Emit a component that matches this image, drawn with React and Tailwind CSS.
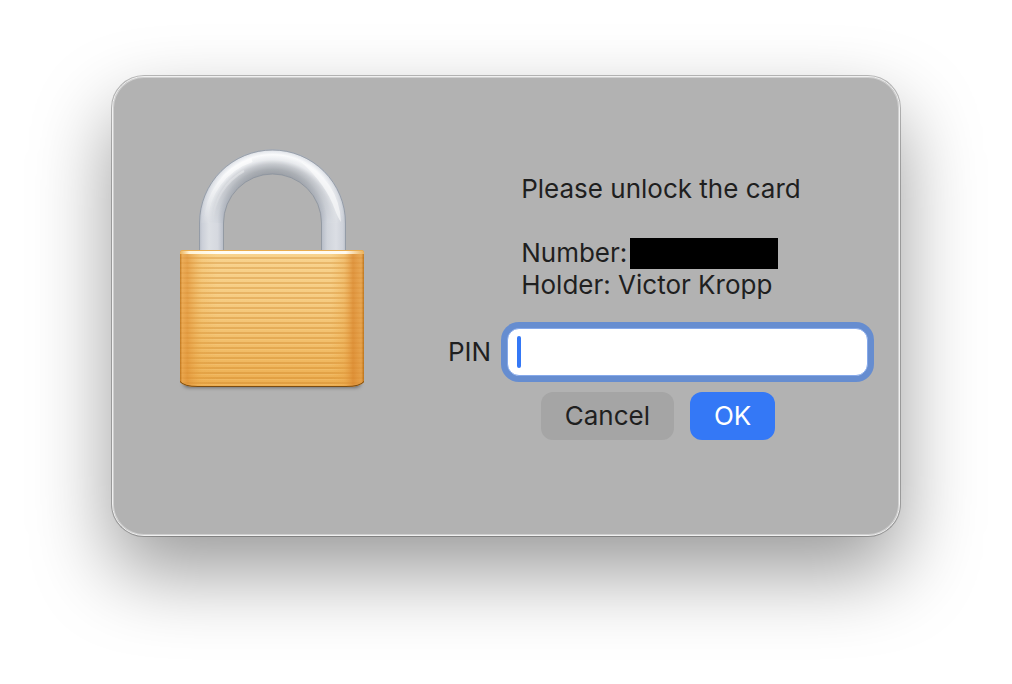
import { useState } from "react";

// y positions of the brushed grooves across the lock body
const grooves = Array.from({ length: 26 }, (_, i) => 115 + i * 5);

function LockIcon() {
  return (
    <svg viewBox="0 0 200 256" className="h-64 w-[200px] shrink-0" aria-hidden="true">
      <defs>
        <linearGradient id="leg" x1="27" x2="52" y1="0" y2="0" gradientUnits="userSpaceOnUse">
          <stop offset="0" stopColor="#b4bac4" />
          <stop offset=".12" stopColor="#cbcfd8" />
          <stop offset=".4" stopColor="#dcdfe4" />
          <stop offset=".75" stopColor="#d5d8df" />
          <stop offset="1" stopColor="#b4bac5" />
        </linearGradient>
        <linearGradient id="legRight" x1="149" x2="174" y1="0" y2="0" gradientUnits="userSpaceOnUse">
          <stop offset="0" stopColor="#b4bac5" />
          <stop offset=".25" stopColor="#d0d4db" />
          <stop offset=".6" stopColor="#dbdee4" />
          <stop offset=".88" stopColor="#ced2da" />
          <stop offset="1" stopColor="#b4bac4" />
        </linearGradient>
        <radialGradient id="arch" cx="100.5" cy="81" r="73.5" gradientUnits="userSpaceOnUse">
          <stop offset=".66" stopColor="#94989e" />
          <stop offset=".73" stopColor="#a4a8ad" />
          <stop offset=".8" stopColor="#c3c6cb" />
          <stop offset=".86" stopColor="#e9ebee" />
          <stop offset=".93" stopColor="#fbfcfd" />
          <stop offset=".98" stopColor="#e3e6eb" />
          <stop offset="1" stopColor="#b4b9c2" />
        </radialGradient>
        <linearGradient id="fade" x1="0" x2="0" y1="8" y2="81" gradientUnits="userSpaceOnUse">
          <stop offset="0" stopColor="#fff" />
          <stop offset=".3" stopColor="#fff" stopOpacity=".85" />
          <stop offset=".7" stopColor="#fff" stopOpacity=".35" />
          <stop offset="1" stopColor="#fff" stopOpacity="0" />
        </linearGradient>
        <mask id="archMask" maskUnits="userSpaceOnUse" x="0" y="0" width="200" height="110">
          <rect width="200" height="110" fill="url(#fade)" />
        </mask>
        {/* same tones as the legs, bent round the arch */}
        <radialGradient id="bend" cx="100.5" cy="81" r="73.5" gradientUnits="userSpaceOnUse">
          <stop offset=".66" stopColor="#b4bac5" />
          <stop offset=".75" stopColor="#d3d7de" />
          <stop offset=".87" stopColor="#dcdfe4" />
          <stop offset=".96" stopColor="#cdd1d9" />
          <stop offset="1" stopColor="#b4bac4" />
        </radialGradient>
        <linearGradient id="brass" x1="0" x2="0" y1="108" y2="244" gradientUnits="userSpaceOnUse">
          <stop offset="0" stopColor="#f8d38e" />
          <stop offset=".35" stopColor="#f6cc82" />
          <stop offset=".75" stopColor="#f1bc66" />
          <stop offset="1" stopColor="#edae50" />
        </linearGradient>
        <linearGradient id="sides" x1="8" x2="192" y1="0" y2="0" gradientUnits="userSpaceOnUse">
          <stop offset="0" stopColor="#b5690f" stopOpacity=".85" />
          <stop offset=".012" stopColor="#e8a148" stopOpacity=".75" />
          <stop offset=".04" stopColor="#de9034" stopOpacity=".7" />
          <stop offset=".12" stopColor="#eba947" stopOpacity=".2" />
          <stop offset=".2" stopColor="#eba947" stopOpacity="0" />
          <stop offset=".82" stopColor="#eba947" stopOpacity="0" />
          <stop offset=".89" stopColor="#e7a043" stopOpacity=".35" />
          <stop offset=".94" stopColor="#da882f" stopOpacity=".8" />
          <stop offset=".985" stopColor="#e39a42" stopOpacity=".75" />
          <stop offset="1" stopColor="#b5690f" stopOpacity=".85" />
        </linearGradient>
        <linearGradient id="rim" x1="8" x2="192" y1="0" y2="0" gradientUnits="userSpaceOnUse">
          <stop offset="0" stopColor="#ecb25a" />
          <stop offset=".05" stopColor="#fff3d6" />
          <stop offset=".2" stopColor="#fffdf6" />
          <stop offset=".9" stopColor="#fffaf0" />
          <stop offset="1" stopColor="#ecb25a" />
        </linearGradient>
        <filter id="soft" x="-20%" y="-200%" width="140%" height="500%">
          <feGaussianBlur stdDeviation="2" />
        </filter>
        <clipPath id="bodyClip">
          <path d="M11 108H189Q192 108 192 111V240Q188 245 174 245H26Q12 245 8 240V111Q8 108 11 108Z" />
        </clipPath>
      </defs>

      <path d="M27 110V80H51.500V110Z" fill="url(#leg)" />
      <path d="M149.500 110V80H174V110Z" fill="url(#legRight)" />
      <path d="M27 81A73.500 73.500 0 0 1 174 81H149.500A49 49 0 0 0 51.500 81Z" fill="url(#bend)" />
      <path
        d="M27 81A73.500 73.500 0 0 1 174 81H149.500A49 49 0 0 0 51.500 81Z"
        fill="url(#arch)"
        mask="url(#archMask)"
      />
      <g mask="url(#archMask)">
        <path d="M34 81A67 67 0 0 1 80 18" fill="none" stroke="#fff" strokeOpacity=".7" strokeWidth="4" />
        <path d="M41 81A60 60 0 0 1 72 29" fill="none" stroke="#fff" strokeOpacity=".4" strokeWidth="2" />
      </g>
      <path d="M128 19A68 68 0 0 1 169 80Q166 76 163 68Q154 42 128 19Z" fill="#fff" fillOpacity=".55" />
      <path
        d="M27.500 109V81A73 73 0 0 1 173.500 81V109M51.500 109V81A49 49 0 0 1 149.500 81V109"
        fill="none"
        stroke="#858d99"
        strokeOpacity=".7"
      />

      <rect x="12" y="236" width="176" height="9" rx="4" fill="#000" fillOpacity=".55" filter="url(#soft)" />
      <g clipPath="url(#bodyClip)">
        <rect x="8" y="108" width="184" height="137" fill="url(#brass)" />
        {grooves.map((y) => (
          <g key={y}>
            <rect x="8" y={y} width="184" height="2" fill="#c67a1e" fillOpacity=".3" />
            <rect x="8" y={y + 2} width="184" height="1" fill="#ffe5ae" fillOpacity=".15" />
          </g>
        ))}
        <rect x="8" y="108" width="184" height="137" fill="url(#sides)" />
        <rect x="8" y="108" width="184" height="1" fill="#e9ad50" />
        <rect x="8" y="109" width="184" height="3" fill="url(#rim)" />
        <path d="M8 239Q12 244 26 244H174Q188 244 192 239V246H8Z" fill="#7a4c12" />
      </g>
    </svg>
  );
}

function PinField({ value, onChange }) {
  return (
    <div className="relative">
      <input
        id="pin"
        type="password"
        value={value}
        onChange={(e) => onChange(e.target.value)}
        className="block h-12 w-full rounded-xl border border-[#86a9ea] bg-white px-3 text-[26px] caret-transparent outline-none ring-6 ring-[#668dd0]"
      />
      {value === "" && (
        <span className="pointer-events-none absolute left-[10px] top-2 h-8 w-1 rounded-full bg-[#3478f6]" />
      )}
    </div>
  );
}

export default function App() {
  const [pin, setPin] = useState("");

  return (
    <main className="min-h-screen overflow-hidden bg-white px-28 pt-[76px] pb-[148px] font-['Inter',sans-serif] text-[26px] leading-8 text-[#1f1f1f]">
      <div
        role="dialog"
        aria-label="Unlock card"
        className="flex items-start gap-[76px] rounded-[32px] border border-[#f0f0f0] bg-[#b2b2b2] pt-[65px] pr-[31px] pb-[95px] pl-[59px] shadow-[inset_0_0_0_1px_#cfcfcf,0_0_0_1px_rgba(0,0,0,0.25),0_36px_80px_rgba(0,0,0,0.4)]"
      >
        <LockIcon />
        <form
          onSubmit={(e) => e.preventDefault()}
          className="mt-[31px] grid min-w-0 flex-1 grid-cols-[auto_1fr] items-center gap-x-4"
        >
          <div className="col-start-2 mb-[27px] pl-[14px]">
            <p>Please unlock the card</p>
            <p className="mt-8 flex items-center gap-[3px]">
              Number: <span className="h-[31px] w-[148px] bg-black" />
            </p>
            <p>Holder: Victor Kropp</p>
          </div>
          <label htmlFor="pin">PIN</label>
          <PinField value={pin} onChange={setPin} />
          <div className="col-span-2 mt-4 flex justify-center gap-4">
            <button type="button" className="h-12 rounded-xl bg-[#a5a5a5] px-6">
              Cancel
            </button>
            <button type="submit" className="h-12 rounded-xl bg-[#3478f6] px-6 text-white">
              OK
            </button>
          </div>
        </form>
      </div>
    </main>
  );
}
